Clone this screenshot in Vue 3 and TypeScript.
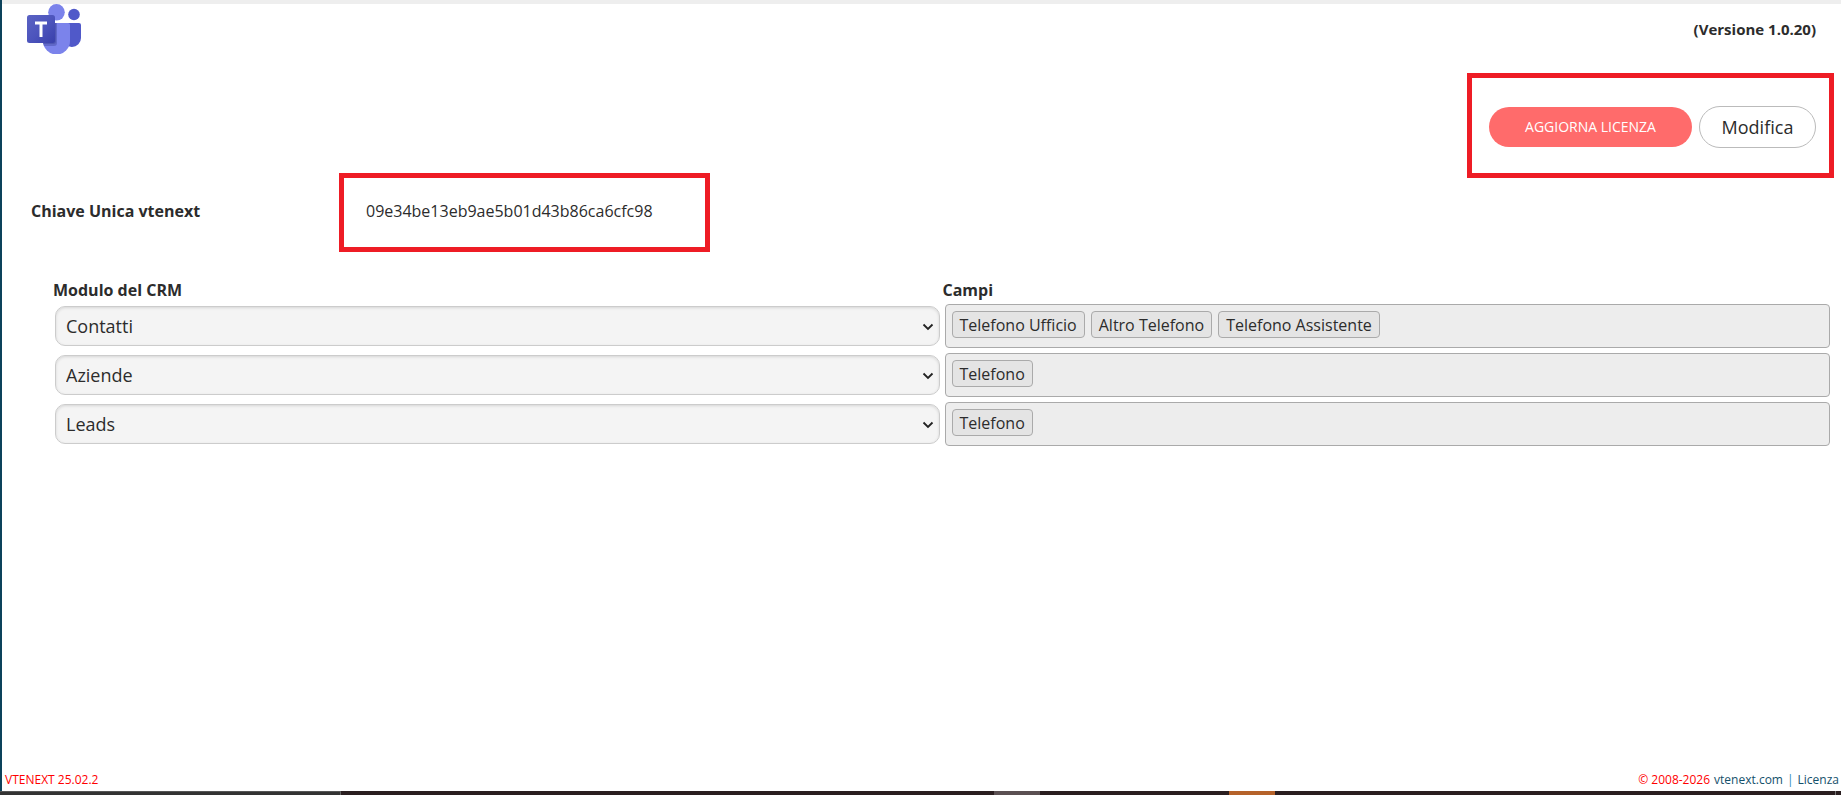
<script setup lang="ts">
import { ref } from 'vue'

interface ModuleRow {
  id: string
  module: string
  fields: string[]
}

const modules: string[] = ['Contatti', 'Aziende', 'Leads']

const rows = ref<ModuleRow[]>([
  { id: 'row-1', module: 'Contatti', fields: ['Telefono Ufficio', 'Altro Telefono', 'Telefono Assistente'] },
  { id: 'row-2', module: 'Aziende', fields: ['Telefono'] },
  { id: 'row-3', module: 'Leads', fields: ['Telefono'] },
])

const uniqueKey = '09e34be13eb9ae5b01d43b86ca6cfc98'
</script>

<template>
  <div class="shell">
    <div class="screen">
      <header class="header">
        <svg class="logo" viewBox="0 0 54 50" role="img" aria-label="Teams">
          <defs>
            <linearGradient id="tile" x1="0" y1="0" x2="1" y2="1">
              <stop offset="0" stop-color="#5a62c3" />
              <stop offset="0.5" stop-color="#4d55bd" />
              <stop offset="1" stop-color="#3940ab" />
            </linearGradient>
            <clipPath id="body">
              <path d="M17 19h24a2 2 0 0 1 2 2v16a13.500 13.500 0 0 1-27 0V20a1 1 0 0 1 1-1z" />
            </clipPath>
          </defs>
          <circle cx="47" cy="10.500" r="5.800" fill="#5059c9" />
          <path d="M38 19h14a2 2 0 0 1 2 2v13a9 9 0 0 1-9 9 9 9 0 0 1-7-3z" fill="#5059c9" />
          <circle cx="29.500" cy="8.300" r="8.300" fill="#7b83eb" />
          <path d="M17 19h24a2 2 0 0 1 2 2v16a13.500 13.500 0 0 1-27 0V20a1 1 0 0 1 1-1z" fill="#7b83eb" />
          <g clip-path="url(#body)">
            <rect x="0" y="12" width="30" height="30" rx="3" fill="#4048a0" opacity="0.45" />
            <rect x="0" y="11" width="29" height="29" rx="3" fill="#4048a0" opacity="0.5" />
          </g>
          <rect x="0" y="11" width="28" height="28" rx="2.500" fill="url(#tile)" />
          <path d="M8 19h12M14 19v14" stroke="#fff" stroke-width="3" fill="none" />
        </svg>
        <strong class="version">(Versione 1.0.20)</strong>
      </header>

      <div class="actions framed">
        <button type="button" class="btn primary">AGGIORNA LICENZA</button>
        <button type="button" class="btn plain">Modifica</button>
      </div>

      <div class="key-row">
        <strong class="key-label">Chiave Unica vtenext</strong>
        <span class="key-value framed">{{ uniqueKey }}</span>
      </div>

      <table class="mapping">
        <thead>
          <tr>
            <th scope="col">Modulo del CRM</th>
            <th scope="col">Campi</th>
          </tr>
        </thead>
        <tbody>
          <tr v-for="row in rows" :key="row.id">
            <td>
              <div class="select-wrap">
                <select :id="row.id" v-model="row.module" aria-label="Modulo del CRM">
                  <option v-for="name in modules" :key="name" :value="name">{{ name }}</option>
                </select>
                <svg class="chevron" viewBox="0 0 12 8" aria-hidden="true">
                  <path d="M1.500 1.500L6 6l4.500-4.500" fill="none" stroke="#222" stroke-width="1.800" />
                </svg>
              </div>
            </td>
            <td>
              <ul class="fields">
                <li v-for="field in row.fields" :key="field">{{ field }}</li>
              </ul>
            </td>
          </tr>
        </tbody>
      </table>

      <footer class="footer">
        <span class="red">VTENEXT 25.02.2</span>
        <span class="credits">
          <span class="red">© 2008-2026</span>
          <a href="#vtenext">vtenext.com</a>
          <span>|</span>
          <a href="#licenza">Licenza</a>
        </span>
      </footer>
    </div>
    <div class="dock">
      <span class="dock-search"></span>
      <span class="dock-gap"></span>
      <span class="dock-active"></span>
      <span class="dock-space"></span>
      <span class="dock-alert"></span>
      <span class="dock-rest"></span>
      <span class="dock-edge"></span>
    </div>
  </div>
</template>

<style>
body {
  margin: 0;
}
</style>

<style scoped>
.shell {
  box-sizing: border-box;
  min-height: 100vh;
  display: flex;
  flex-direction: column;
  background: #fff;
  color: #2c2c2c;
  font-family: "Open Sans", "Noto Sans", sans-serif;
  font-size: 16px;
  line-height: 22px;
}

.screen {
  flex: 1;
  display: flex;
  flex-direction: column;
  border-left: 2px solid #0c425b;
}

.header {
  display: flex;
  justify-content: space-between;
  align-items: center;
  padding: 0 25px;
  border-top: 4px solid #eee;
}

.logo {
  width: 54px;
  height: 50px;
}

.version {
  font-size: 15px;
}

.framed {
  border: 5px solid #ee1c25;
}

.actions {
  align-self: flex-end;
  display: flex;
  align-items: center;
  gap: 7px;
  margin: 19px 7px 0 0;
  padding: 28px 13px 25px 17px;
}

.btn {
  box-sizing: border-box;
  font-family: inherit;
  border-radius: 21px;
  cursor: pointer;
}

.primary {
  width: 203px;
  height: 40px;
  padding: 0 0 2px;
  border: 0;
  background: #ff6b6b;
  color: #fff;
  font-size: 14px;
}

.plain {
  width: 117px;
  height: 42px;
  padding: 0;
  border: 1px solid #bbb;
  background: #fff;
  color: #2c2c2c;
  font-size: 18px;
}

.key-row {
  display: flex;
  align-items: baseline;
  margin-top: -5px;
  padding-left: 29px;
}

.key-label {
  width: 308px;
}

.key-value {
  box-sizing: border-box;
  min-width: 371px;
  padding: 22px 22px 25px;
}

.mapping {
  width: calc(100% - 60px);
  table-layout: fixed;
  border-collapse: collapse;
  margin: 26px 9px 0 51px;
}

.mapping th {
  padding: 0;
  text-align: left;
  line-height: 24px;
}

.mapping td {
  padding: 2px 2px 3px;
  vertical-align: middle;
}

.select-wrap {
  position: relative;
  margin-right: 1px;
}

.select-wrap select {
  display: block;
  box-sizing: border-box;
  width: 100%;
  height: 40px;
  padding: 0 32px 0 10px;
  appearance: none;
  border: 1px solid #ccc;
  border-radius: 10px;
  background: #f4f4f4;
  box-shadow: inset 0 1px 3px rgba(0, 0, 0, 0.12);
  color: #2c2c2c;
  font-family: inherit;
  font-size: 18px;
}

.chevron {
  position: absolute;
  top: 17px;
  right: 6px;
  width: 12px;
  height: 8px;
  pointer-events: none;
}

.fields {
  box-sizing: border-box;
  display: flex;
  gap: 6px;
  min-height: 44px;
  margin: 0;
  padding: 6px;
  border: 1px solid #aaa;
  border-radius: 4px;
  background: #ededed;
  list-style: none;
}

.fields li {
  box-sizing: border-box;
  height: 27px;
  padding: 2px 7px 1px;
  border: 1px solid #aaa;
  border-radius: 4px;
  background: #e4e4e4;
}

.footer {
  display: flex;
  justify-content: space-between;
  margin-top: auto;
  padding: 0 2px 2px 3px;
  font-size: 12px;
  line-height: 18px;
  color: #2b8bb8;
}

.credits {
  display: flex;
  gap: 4px;
}

.red {
  color: #f00;
}

.footer a {
  color: #14506b;
  text-decoration: none;
}

.dock {
  display: flex;
  height: 4px;
  background: #2a1e20;
}

.dock-search {
  box-sizing: border-box;
  width: 341px;
  border-top: 1px solid #555;
  border-right: 1px solid #666;
  background: #333;
}

.dock-gap {
  width: 653px;
}

.dock-active {
  width: 46px;
  background: #5b5052;
}

.dock-space {
  width: 189px;
}

.dock-alert {
  width: 46px;
  background: #b5622a;
}

.dock-rest {
  flex: 1;
}

.dock-edge {
  width: 1px;
  margin-right: 5px;
  background: #777;
}
</style>
